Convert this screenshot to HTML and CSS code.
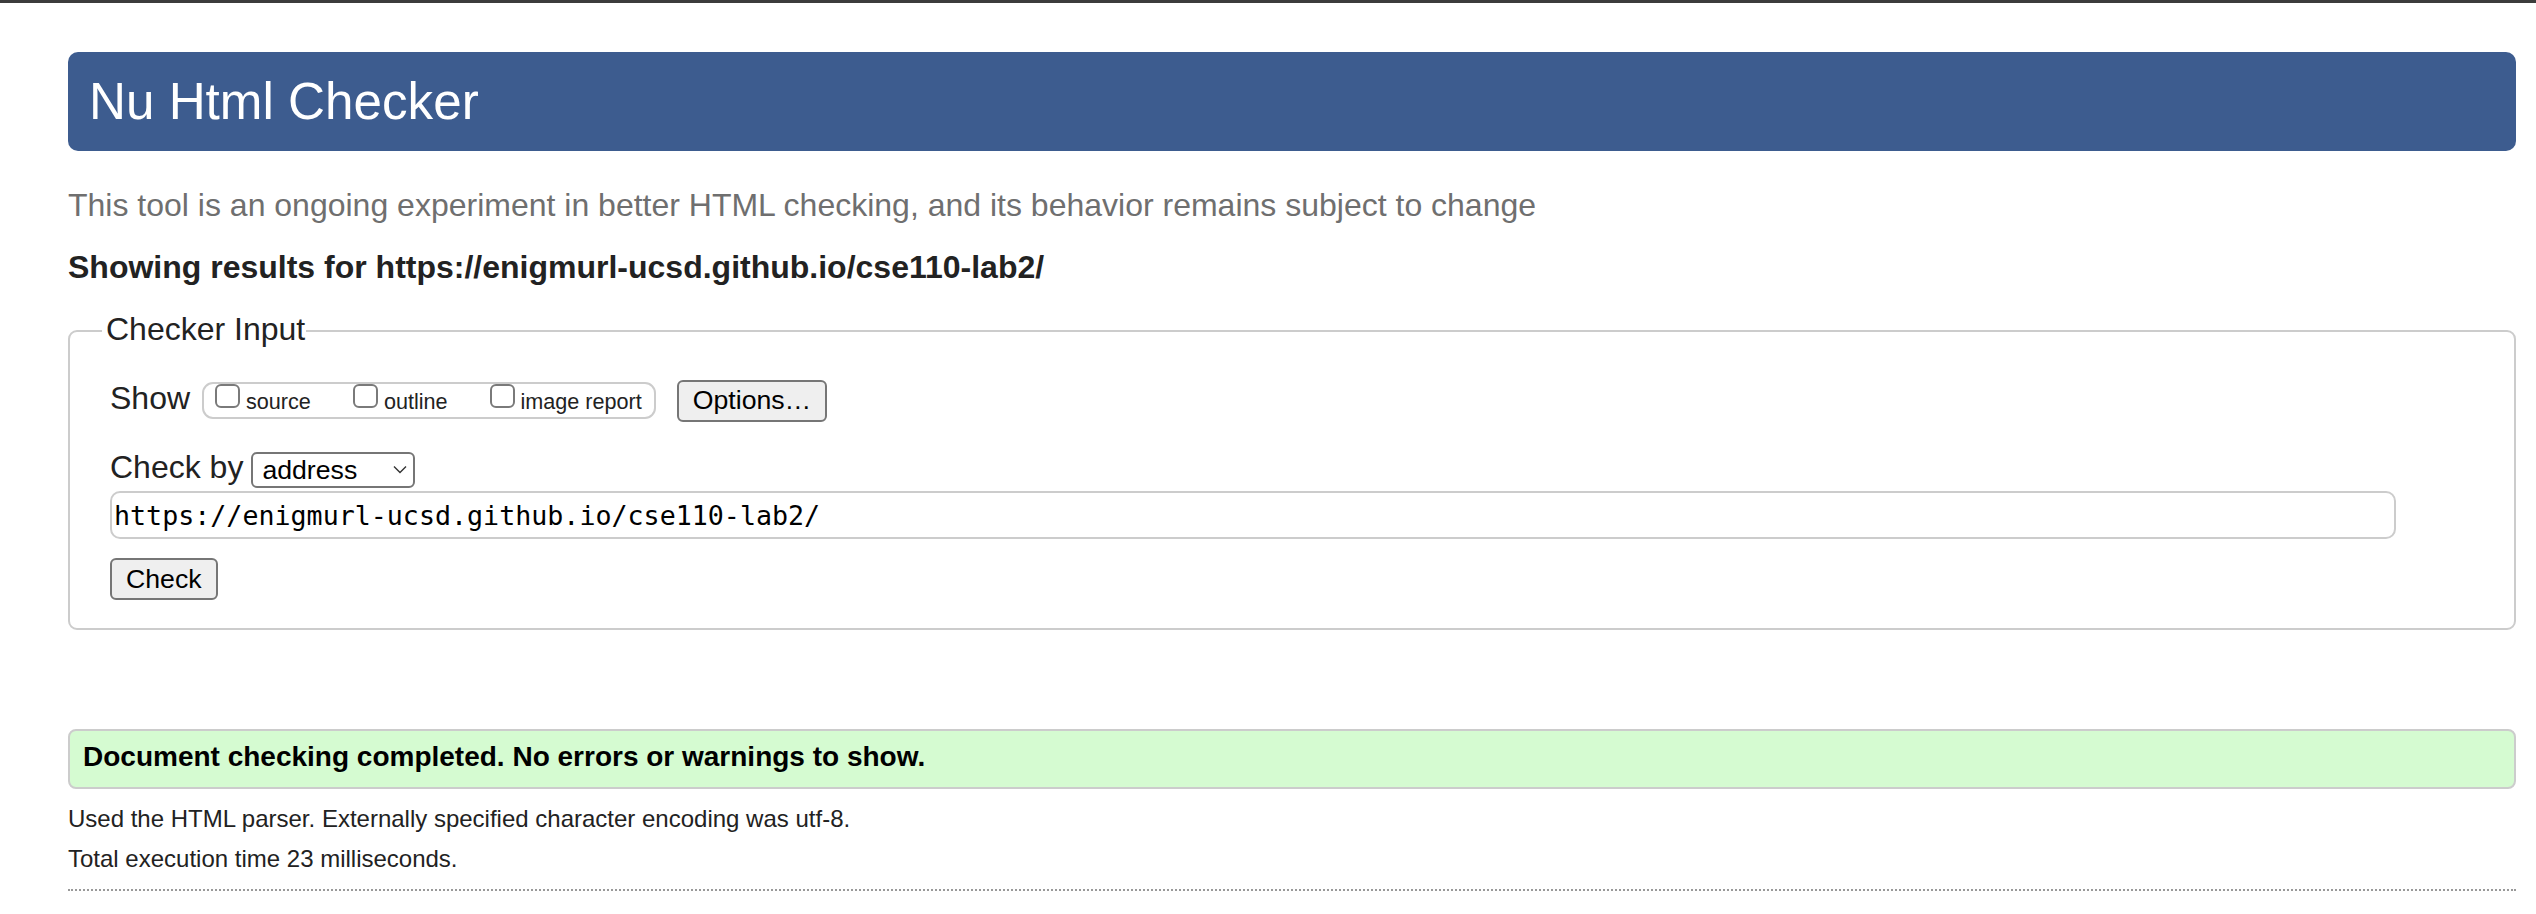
FILE: index.html
```html
<!DOCTYPE html>
<html lang="en">
<head>
<meta charset="utf-8">
<title>Nu Html Checker</title>
<link rel="stylesheet" href="styles.css">
</head>
<body>
<div class="topbar"></div>
<main class="page">
  <h1 class="title">Nu Html Checker</h1>
  <p class="lead">This tool is an ongoing experiment in better HTML checking, and its behavior remains subject to change</p>
  <h2 class="target">Showing results for https://enigmurl-ucsd.github.io/cse110-lab2/</h2>
  <fieldset class="checker">
    <legend class="legend">Checker Input</legend>
    <div class="row">
      <span class="lbl">Show</span>
      <div class="opts">
        <label class="opt"><input class="cb" type="checkbox"><span class="opt-text">source</span></label>
        <label class="opt"><input class="cb" type="checkbox"><span class="opt-text">outline</span></label>
        <label class="opt"><input class="cb" type="checkbox"><span class="opt-text">image report</span></label>
      </div>
      <button class="btn btn-options" type="button">Options…</button>
    </div>
    <div class="row row-by">
      <span class="lbl">Check by</span>
      <span class="selwrap">
        <select class="sel"><option>address</option></select>
        <svg class="chev" width="14" height="9" viewBox="0 0 14 9"><path d="M1 1.5 L7 7.5 L13 1.5" fill="none" stroke="#333" stroke-width="1.4"/></svg>
      </span>
    </div>
    <input class="url" type="text" value="https://enigmurl-ucsd.github.io/cse110-lab2/">
    <div class="submit"><button class="btn" type="button">Check</button></div>
  </fieldset>
  <p class="success">Document checking completed. No errors or warnings to show.</p>
  <p class="info">Used the HTML parser. Externally specified character encoding was utf-8.</p>
  <p class="info">Total execution time 23 milliseconds.</p>
  <hr class="dots">
</main>
</body>
</html>
```
FILE: styles.css
```css
html, body {
  margin: 0;
  padding: 0;
  background: #ffffff;
}
body {
  font-family: "Liberation Sans", Arial, sans-serif;
  color: #222222;
}
.topbar {
  height: 3px;
  background: #3c3c3c;
}
.page {
  padding: 0 20px 0 68px;
}
.title {
  margin: 49px 0 0 0;
  padding: 20px 21px;
  background: #3d5c8f;
  color: #ffffff;
  font-size: 51.2px;
  line-height: 59px;
  font-weight: normal;
  border-radius: 10px;
}
.lead {
  margin: 35px 0 0 0;
  font-size: 32px;
  line-height: 38px;
  color: #6f6f6f;
}
.target {
  margin: 24px 0 0 0;
  font-size: 32px;
  line-height: 38px;
  font-weight: bold;
  color: #222222;
}
.checker {
  margin: 24px 0 0 0;
  padding: 27px 40px 28px 40px;
  border: 2px solid #cccccc;
  border-radius: 9px;
  min-width: 0;
}
.legend {
  margin-left: -8px;
  padding: 0 1px 4px 4px;
  font-size: 32px;
  line-height: 38px;
  color: #222222;
}
.row {
  display: flex;
  align-items: center;
}
.row-by {
  margin-top: 26px;
}
.lbl {
  font-size: 32px;
  line-height: 38px;
  padding-bottom: 5px;
  color: #222222;
}
.opts {
  display: flex;
  align-items: flex-start;
  margin-left: 12px;
  padding: 0 12px 0 11px;
  border: 2px solid #cccccc;
  border-radius: 11px;
}
.opt {
  display: flex;
  align-items: flex-start;
}
.opt + .opt {
  margin-left: 42px;
}
.cb {
  appearance: none;
  -webkit-appearance: none;
  width: 25px;
  height: 24px;
  margin: 0;
  border: 2px solid #7a7a7a;
  border-radius: 6px;
  background: #ffffff;
}
.opt-text {
  margin-left: 6px;
  padding-top: 3px;
  font-size: 21.6px;
  line-height: 30px;
  color: #222222;
}
.btn {
  font-family: "Liberation Sans", Arial, sans-serif;
  font-size: 26.67px;
  height: 42px;
  padding: 0 14px;
  border: 2px solid #767676;
  border-radius: 6px;
  background: #efefef;
  color: #000000;
}
.btn-options {
  margin-left: 21px;
}
.selwrap {
  position: relative;
  display: inline-block;
  margin-left: 8px;
  height: 36px;
}
.sel {
  appearance: none;
  -webkit-appearance: none;
  width: 164px;
  height: 36px;
  margin: 0;
  padding: 0 0 0 9px;
  border: 2px solid #767676;
  border-radius: 6px;
  background: #ffffff;
  font-family: "Liberation Sans", Arial, sans-serif;
  font-size: 26.67px;
  color: #000000;
}
.chev {
  position: absolute;
  right: 8px;
  top: 13px;
  pointer-events: none;
}
.url {
  display: block;
  box-sizing: border-box;
  width: calc(100% - 78px);
  height: 48px;
  margin: 0;
  padding: 0 2px;
  border: 2px solid #cccccc;
  border-radius: 10px;
  font-family: "DejaVu Sans Mono", Menlo, monospace;
  font-size: 26.67px;
  color: #000000;
}
.submit {
  margin-top: 19px;
}
.success {
  margin: 99px 0 0 0;
  padding: 10px 13px 14px 13px;
  border: 2px solid #cccccc;
  border-radius: 8px;
  background: #d5fbd1;
  font-size: 28px;
  line-height: 32px;
  font-weight: bold;
  color: #000000;
}
.info {
  margin: 8px 0 0 0;
  font-size: 24px;
  line-height: 32px;
  color: #222222;
}
.success + .info {
  margin-top: 14px;
}
.dots {
  margin: 14px 0 0 0;
  border: 0;
  border-top: 2px dotted #999999;
  height: 0;
}
```
